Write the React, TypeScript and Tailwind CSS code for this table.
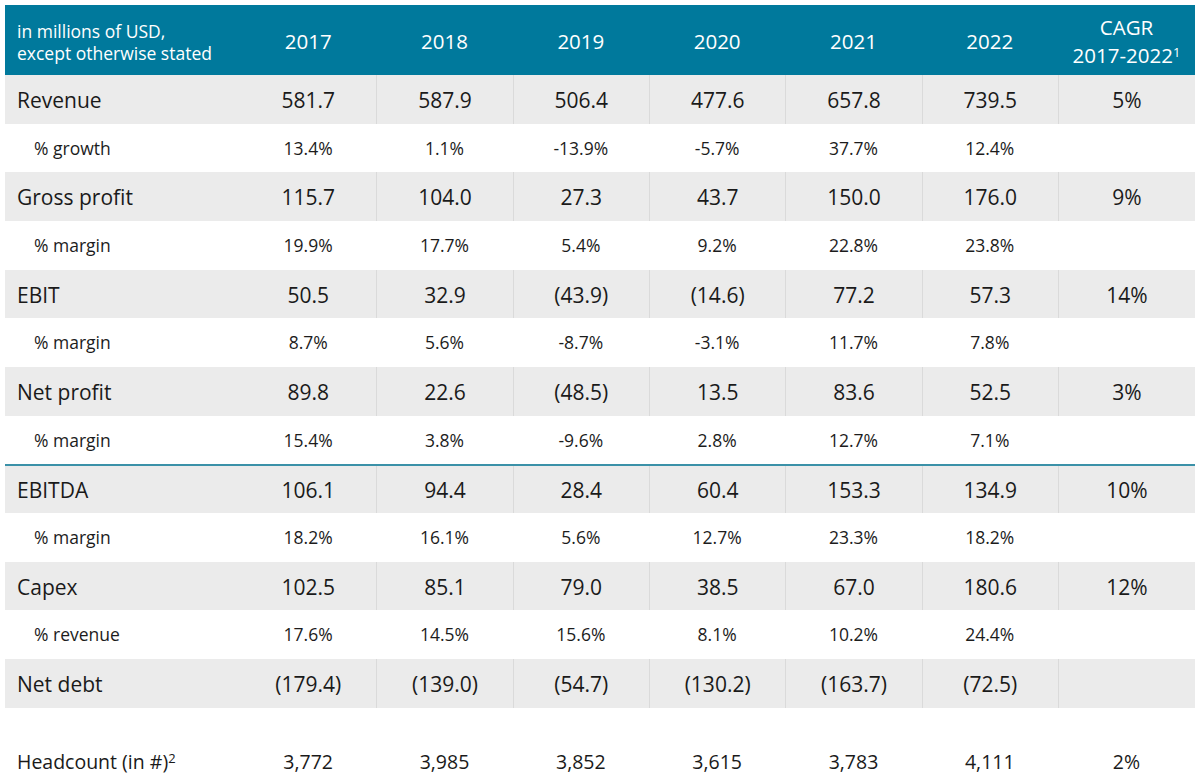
const years = ['2017', '2018', '2019', '2020', '2021', '2022']

type Row = { label: string; values: string[]; cagr?: string; sub?: boolean; topRule?: boolean }

const rows: Row[] = [
  { label: 'Revenue', values: ['581.7', '587.9', '506.4', '477.6', '657.8', '739.5'], cagr: '5%' },
  { label: '% growth', values: ['13.4%', '1.1%', '-13.9%', '-5.7%', '37.7%', '12.4%'], sub: true },
  { label: 'Gross profit', values: ['115.7', '104.0', '27.3', '43.7', '150.0', '176.0'], cagr: '9%' },
  { label: '% margin', values: ['19.9%', '17.7%', '5.4%', '9.2%', '22.8%', '23.8%'], sub: true },
  { label: 'EBIT', values: ['50.5', '32.9', '(43.9)', '(14.6)', '77.2', '57.3'], cagr: '14%' },
  { label: '% margin', values: ['8.7%', '5.6%', '-8.7%', '-3.1%', '11.7%', '7.8%'], sub: true },
  { label: 'Net profit', values: ['89.8', '22.6', '(48.5)', '13.5', '83.6', '52.5'], cagr: '3%' },
  { label: '% margin', values: ['15.4%', '3.8%', '-9.6%', '2.8%', '12.7%', '7.1%'], sub: true },
  { label: 'EBITDA', values: ['106.1', '94.4', '28.4', '60.4', '153.3', '134.9'], cagr: '10%', topRule: true },
  { label: '% margin', values: ['18.2%', '16.1%', '5.6%', '12.7%', '23.3%', '18.2%'], sub: true },
  { label: 'Capex', values: ['102.5', '85.1', '79.0', '38.5', '67.0', '180.6'], cagr: '12%' },
  { label: '% revenue', values: ['17.6%', '14.5%', '15.6%', '8.1%', '10.2%', '24.4%'], sub: true },
  { label: 'Net debt', values: ['(179.4)', '(139.0)', '(54.7)', '(130.2)', '(163.7)', '(72.5)'], cagr: '' },
]

const grid = 'grid grid-cols-[235px_repeat(6,136.33px)_137px]'

function TableRow({ row }: { row: Row }) {
  if (row.sub) {
    return (
      <div className={`${grid} h-[48.67px] items-center text-[17.5px] text-[#1c1c1c]`}>
        <div className="pl-[29px]">{row.label}</div>
        {row.values.map((v, i) => (
          <div key={i} className="text-center">{v}</div>
        ))}
        <div />
      </div>
    )
  }
  return (
    <div
      className={`${grid} h-[48.67px] bg-[#ebebeb] text-[21px] text-[#1a1a1a] ${
        row.topRule ? 'border-t-2 border-[#3b91a8]' : ''
      }`}
    >
      <div className="flex items-center pt-[3px] pl-3">{row.label}</div>
      {row.values.map((v, i) => (
        <div key={i} className={`flex items-center justify-center pt-[3px] ${i > 0 ? 'border-l border-[#dadada]' : ''}`}>
          {v}
        </div>
      ))}
      <div className="flex items-center justify-center border-l border-[#dadada] pt-[3px]">{row.cagr}</div>
    </div>
  )
}

export default function App() {
  return (
    <div className="min-h-[784px] bg-white p-[5px] font-['Open_Sans',sans-serif]">
      <div className="w-[1190px]">
        <div className={`${grid} h-[70px] bg-[#00799c] text-white`}>
          <div className="flex flex-col justify-center pt-[4px] pl-3 text-[17.5px] leading-[22px]">
            <span>in millions of USD,</span>
            <span>except otherwise stated</span>
          </div>
          {years.map((y) => (
            <div key={y} className="flex items-center justify-center pt-[2px] text-[20.5px]">
              {y}
            </div>
          ))}
          <div className="flex flex-col items-center justify-center pt-[2px] text-[20.5px] leading-[28px]">
            <span>CAGR</span>
            <span>
              2017-2022<sup className="text-[13px]">1</sup>
            </span>
          </div>
        </div>

        {rows.map((r, i) => (
          <TableRow key={i} row={r} />
        ))}

        <div className="h-[30px]" />

        <div className={`${grid} h-[49px] items-center text-[19.5px] text-[#1a1a1a]`}>
          <div className="pl-3">
            Headcount (in #)<sup className="text-[13px]">2</sup>
          </div>
          {['3,772', '3,985', '3,852', '3,615', '3,783', '4,111'].map((v) => (
            <div key={v} className="text-center">{v}</div>
          ))}
          <div className="text-center">2%</div>
        </div>
      </div>
    </div>
  )
}
